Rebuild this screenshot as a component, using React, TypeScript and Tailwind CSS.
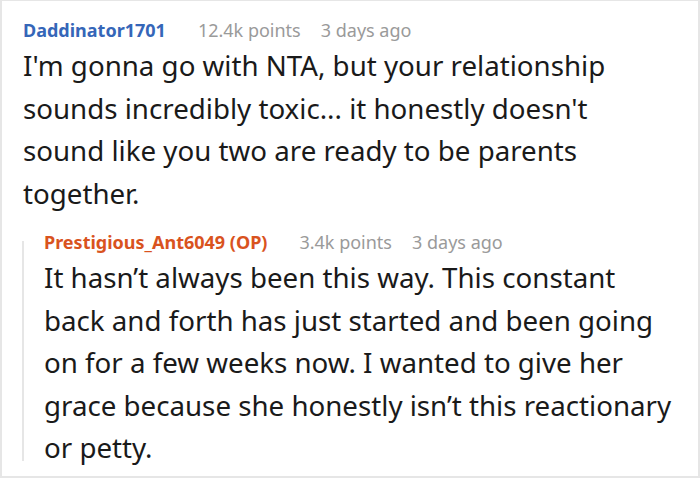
import React from 'react';

const font = { fontFamily: '"Noto Sans", "Open Sans", sans-serif' };

export default function App() {
  return (
    <div className="w-[700px] h-[478px] bg-white border-2 border-[#e6e6e6] border-t overflow-hidden" style={font}>
      {/* top comment */}
      <div className="pl-[21px] pt-[17px]">
        <div className="flex items-center text-[18px] leading-[24px]">
          <span className="font-bold text-[#3566b8]">Daddinator1701</span>
          <span className="ml-[32px] text-[#9a9a9a]">12.4k points</span>
          <span className="ml-[20px] text-[#9a9a9a]">3 days ago</span>
        </div>
        <p className="mt-[2px] text-[27.7px] leading-[42.5px] text-[#1a1a1a]">
          I'm gonna go with NTA, but your relationship
          <br />
          sounds incredibly toxic... it honestly doesn't
          <br />
          sound like you two are ready to be parents
          <br />
          together.
        </p>
      </div>

      {/* reply */}
      <div className="ml-[20px] mt-[16px] flex">
        <div className="w-[2px] bg-[#e6e6e6] mt-[11px] mb-[8px]" />
        <div className="pl-[20px]">
          <div className="flex items-center text-[18px] leading-[24px]">
            <span className="font-bold text-[#d9531e]">Prestigious_Ant6049 (OP)</span>
            <span className="ml-[32px] text-[#9a9a9a]">3.4k points</span>
            <span className="ml-[20px] text-[#9a9a9a]">3 days ago</span>
          </div>
          <p className="mt-[2px] text-[27.7px] leading-[42.5px] text-[#1a1a1a]">
            It hasn’t always been this way. This constant
            <br />
            back and forth has just started and been going
            <br />
            on for a few weeks now. I wanted to give her
            <br />
            grace because she honestly isn’t this reactionary
            <br />
            or petty.
          </p>
        </div>
      </div>
    </div>
  );
}
